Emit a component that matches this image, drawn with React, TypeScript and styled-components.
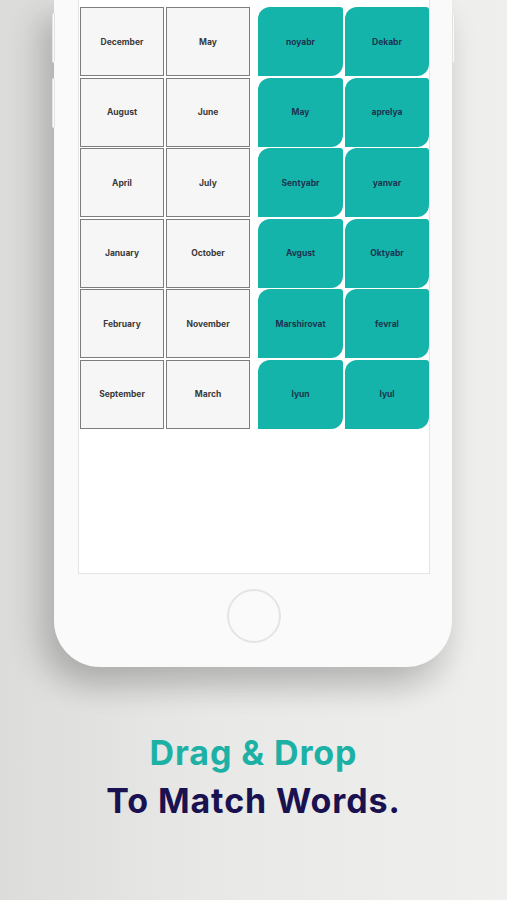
import React from "react";
import styled, { createGlobalStyle } from "styled-components";

const GlobalStyle = createGlobalStyle`
  html, body {
    margin: 0;
    padding: 0;
    background: #ebebea;
  }
  * {
    box-sizing: border-box;
  }
`;

const Page = styled.div`
  width: 507px;
  height: 900px;
  overflow: hidden;
  display: flex;
  flex-direction: column;
  background: linear-gradient(90deg, #dcdcdb 0%, #e8e8e7 40%, #efefed 100%);
  font-family: Inter, "Liberation Sans", sans-serif;
`;

const Phone = styled.div`
  position: relative;
  margin-left: 54px;
  width: 398px;
  height: 667px;
  padding: 0 22px 0 24px;
  display: flex;
  flex-direction: column;
  background: #fafafa;
  border-radius: 0 0 46px 46px;
  box-shadow: -18px 14px 34px rgba(0, 0, 0, 0.16),
    0 22px 30px rgba(0, 0, 0, 0.1);
`;

const SideButton = styled.span<{ side: "left" | "right"; top: number }>`
  position: absolute;
  top: ${({ top }) => top}px;
  ${({ side }) => (side === "left" ? "left: -2px;" : "right: -3px;")}
  width: 3px;
  height: 50px;
  background: #fbfbfb;
  border: 1px solid #e2e2e2;
  border-radius: 2px;
`;

const Screen = styled.div`
  height: 574px;
  padding: 7px 0 0 1px;
  background: #ffffff;
  border: 1px solid #e4e4e4;
  border-top: none;
  display: flex;
  gap: 8px;
`;

const Grid = styled.div<{ cols: string }>`
  display: grid;
  grid-template-columns: ${({ cols }) => cols};
  grid-auto-rows: 69px;
  column-gap: 2px;
  row-gap: 1.6px;
  align-content: start;
`;

const WordCell = styled.div`
  display: flex;
  align-items: center;
  justify-content: center;
  background: #f6f6f6;
  border: 1.5px solid #7d7d7d;
  color: #3a3a3a;
  font-size: 8.5px;
  font-weight: 700;
`;

const TargetCell = styled.div`
  display: flex;
  align-items: center;
  justify-content: center;
  background: #15b4ab;
  border-radius: 12px 3px 12px 0;
  color: #1b3550;
  font-size: 8.5px;
  font-weight: 700;
`;

const HomeButton = styled.div`
  margin: 15px auto 0;
  width: 54px;
  height: 54px;
  border-radius: 50%;
  border: 2px solid #e4e4e4;
`;

const Headline = styled.div`
  margin-top: 62px;
  text-align: center;
  font-weight: 700;
  font-size: 34px;
  letter-spacing: 0.9px;
  line-height: 48px;
`;

const Line = styled.div<{ tone: "teal" | "navy" }>`
  color: ${({ tone }) => (tone === "teal" ? "#1db1a5" : "#1a1250")};
`;

const english = [
  ["December", "May"],
  ["August", "June"],
  ["April", "July"],
  ["January", "October"],
  ["February", "November"],
  ["September", "March"],
];

const uzbek = [
  ["noyabr", "Dekabr"],
  ["May", "aprelya"],
  ["Sentyabr", "yanvar"],
  ["Avgust", "Oktyabr"],
  ["Marshirovat", "fevral"],
  ["Iyun", "Iyul"],
];

const App: React.FC = () => (
  <>
    <GlobalStyle />
    <Page>
      <Phone>
        <SideButton side="left" top={13} />
        <SideButton side="left" top={78} />
        <SideButton side="right" top={13} />
        <Screen>
          <Grid cols="84px 84px">
            {english.flat().map((w, i) => (
              <WordCell key={i}>{w}</WordCell>
            ))}
          </Grid>
          <Grid cols="85px 84px">
            {uzbek.flat().map((w, i) => (
              <TargetCell key={i}>{w}</TargetCell>
            ))}
          </Grid>
        </Screen>
        <HomeButton />
      </Phone>
      <Headline>
        <Line tone="teal">Drag &amp; Drop</Line>
        <Line tone="navy">To Match Words.</Line>
      </Headline>
    </Page>
  </>
);

export default App;
